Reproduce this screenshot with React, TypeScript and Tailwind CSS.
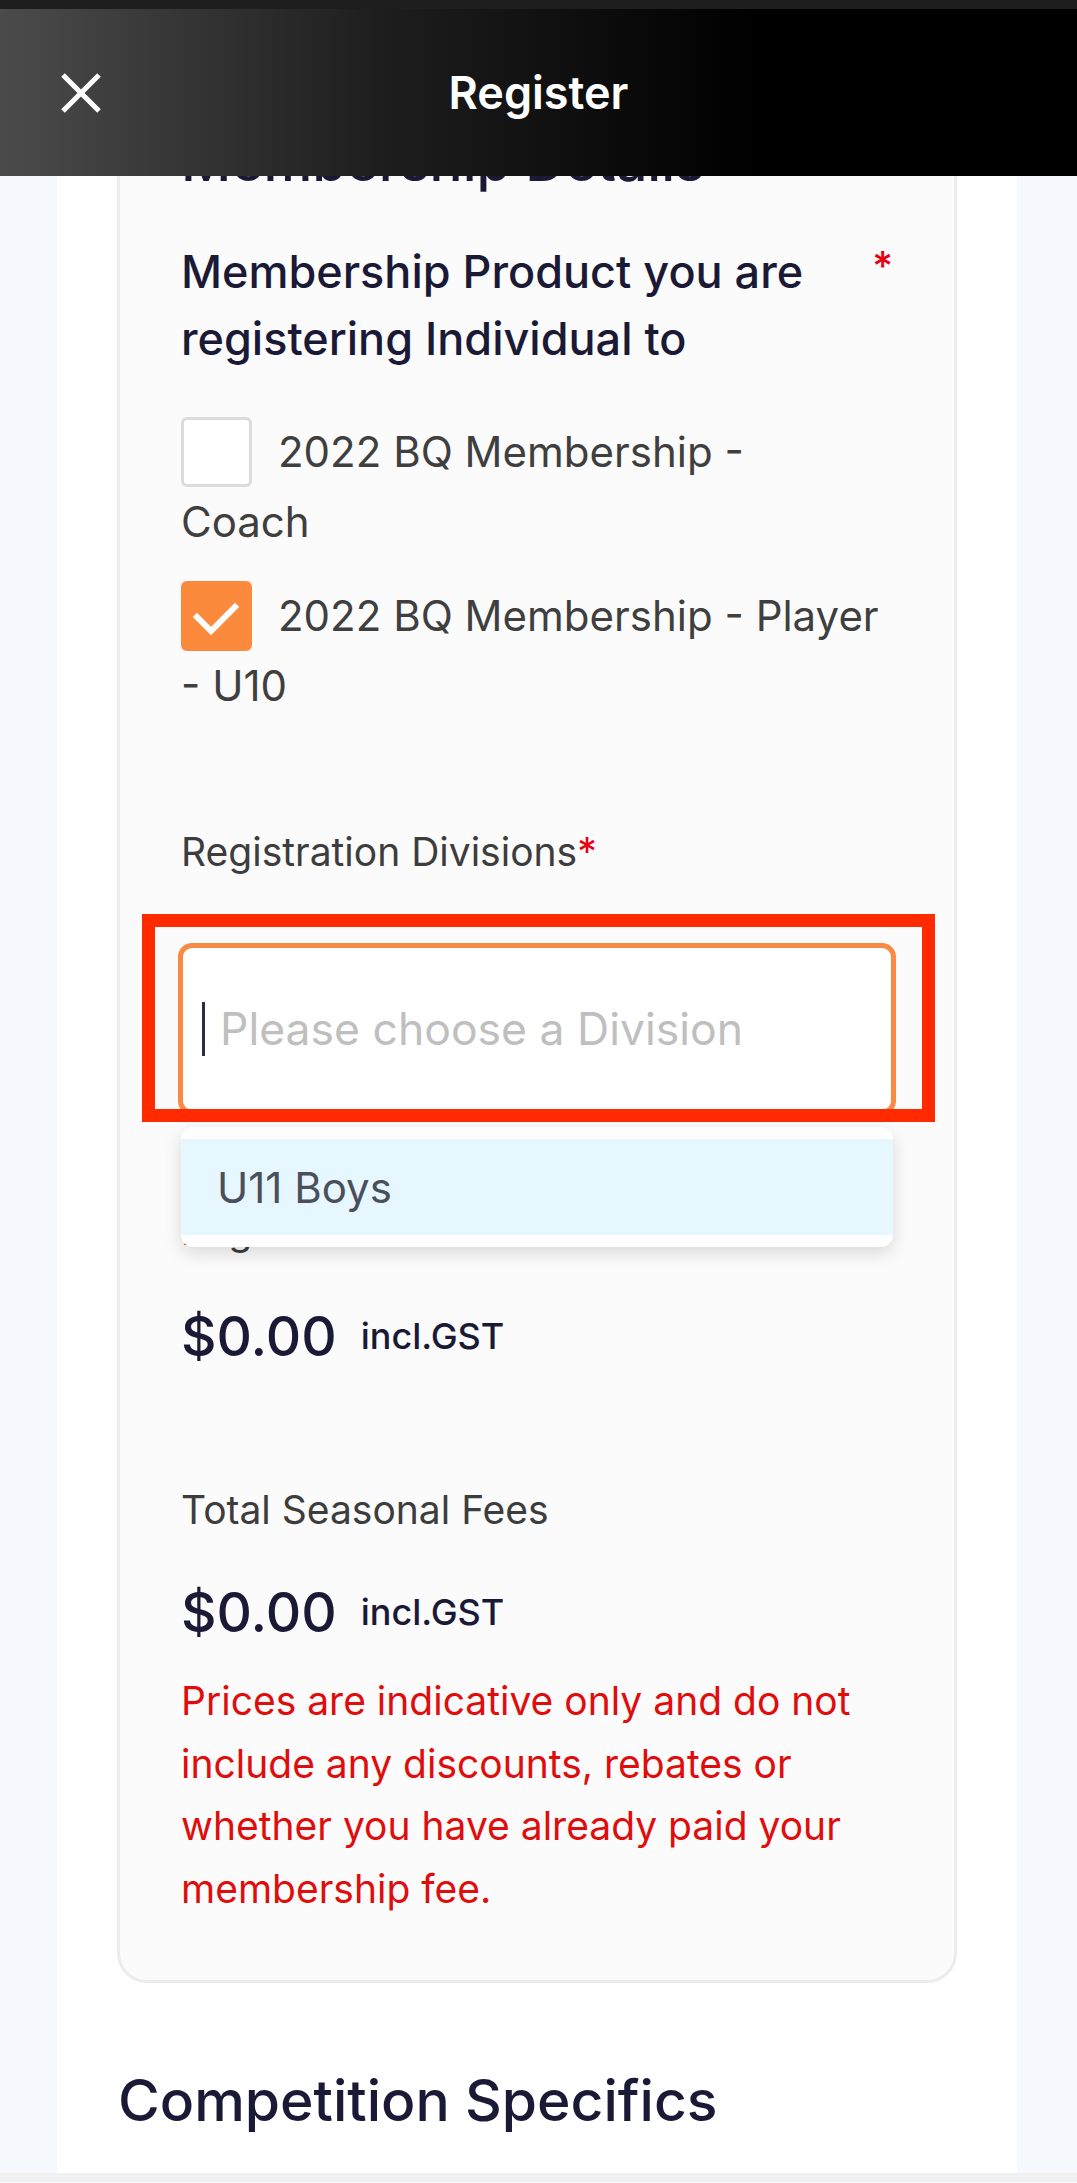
import React from 'react';

const options = [
  { label: '2022 BQ Membership - Coach', checked: false },
  { label: '2022 BQ Membership - Player - U10', checked: true },
];

function Checkbox({ checked }: { checked: boolean }) {
  if (checked) {
    return (
      <span className="inline-block align-top w-[71px] h-[70px] rounded-[6px] bg-[#fb8a3c]">
        <svg width="71" height="70" viewBox="0 0 71 70" fill="none">
          <path d="M16 36 L30 50 L54 26" stroke="#fff" strokeWidth="6" strokeLinecap="square" />
        </svg>
      </span>
    );
  }
  return <span className="inline-block align-top w-[71px] h-[70px] rounded-[6px] border-[3px] border-[#dcdcdc] bg-white" />;
}

function Price() {
  return (
    <div className="flex items-center h-[70px] gap-[24px] text-[#1b1a36]">
      <span className="text-[55px] font-medium">$0.00</span>
      <span className="text-[36px] font-medium">incl.GST</span>
    </div>
  );
}

export default function App() {
  return (
    <div className="relative w-[1077px] min-h-[2183px] bg-[#f5f8fc] font-['Inter',sans-serif] overflow-hidden">
      {/* scrolled page */}
      <div className="ml-[57px] w-[960px] bg-white pt-[100px] pb-[37px]">
        <div className="mx-[60px] rounded-[30px] border-[3px] border-[#ececec] bg-[#fbfbfb] pt-[23px] pb-[60px] pl-[61px] pr-[61px]">
          <h2 className="text-[55px] leading-[70px] font-medium text-[#1b1a36]">Membership Details</h2>

          <div className="mt-[42px] flex justify-between text-[45px] leading-[67px] font-medium text-[#1b1a36]">
            <span className="w-[670px]">Membership Product you are registering Individual to</span>
            <span className="text-[#e60012] text-[40px] -mt-[6px]">*</span>
          </div>

          <div className="mt-[45px] flex flex-col gap-[24px]">
            {options.map((o) => (
              <label key={o.label} className="block w-[698px] text-[42px] leading-[70px] text-[#3f3f3f]">
                <Checkbox checked={o.checked} />
                <span className="pl-[26px]">{o.label}</span>
              </label>
            ))}
          </div>

          <div className="mt-[103px] text-[39px] leading-[56px] text-[#3d3d3d]">
            Registration Divisions<span className="text-[#e60012]">*</span>
          </div>

          <div className="relative mt-[63px] -mx-[3px]">
            <div className="h-[172px] rounded-[14px] border-[5px] border-[#f98a45] bg-white flex items-center pl-[19px]">
              <span className="w-[3px] h-[54px] bg-[#2d2b4a]" />
              <span className="ml-[15px] text-[44.5px] text-[#bfbfbf]">Please choose a Division</span>
            </div>

            {/* annotation box */}
            <div className="absolute -left-[36px] -top-[29px] w-[793px] h-[208px] border-[13px] border-[#ff2a00]" />

            {/* dropdown menu */}
            <div className="absolute left-[3px] top-[184px] w-[712px] h-[120px] rounded-[12px] bg-white py-[12px] shadow-[0_6px_18px_rgba(0,0,0,0.14)] z-10">
              <div className="h-[96px] bg-[#e6f7ff] flex items-center pl-[36px] text-[42px] text-[#4a4f5a]">U11 Boys</div>
            </div>
          </div>

          <div className="mt-[88px] text-[39px] leading-[56px] text-[#3d3d3d]">Registration Fees</div>
          <div className="mt-[42px]">
            <Price />
          </div>

          <div className="mt-[111px] text-[39px] leading-[56px] text-[#3d3d3d]">Total Seasonal Fees</div>
          <div className="mt-[39px]">
            <Price />
          </div>

          <p className="mt-[23px] text-[39px] leading-[62.5px] text-[#e00d0d]">
            Prices are indicative only and do not include any discounts, rebates or whether you have already paid your membership fee.
          </p>
        </div>

        <h2 className="mt-[83px] ml-[61px] text-[57px] leading-[70px] font-medium text-[#1b1a36]">Competition Specifics</h2>
      </div>
      <div className="h-[9px] bg-[#f0f0f0]" />

      {/* fixed header over the page */}
      <div className="absolute top-0 left-0 w-full">
        <div className="h-[9px] bg-[#1e1e1e]" />
        <div className="h-[167px] bg-[linear-gradient(90deg,#4b4b4b_0%,#1e1e1e_35%,#000_70%)] flex items-center relative">
          <svg className="absolute left-[60px] top-[63px]" width="42" height="42" viewBox="0 0 42 42">
            <path d="M3 3 L39 39 M39 3 L3 39" stroke="#fff" strokeWidth="5" />
          </svg>
          <div className="flex-1 text-center text-white text-[45px] font-semibold">Register</div>
        </div>
      </div>
    </div>
  );
}
